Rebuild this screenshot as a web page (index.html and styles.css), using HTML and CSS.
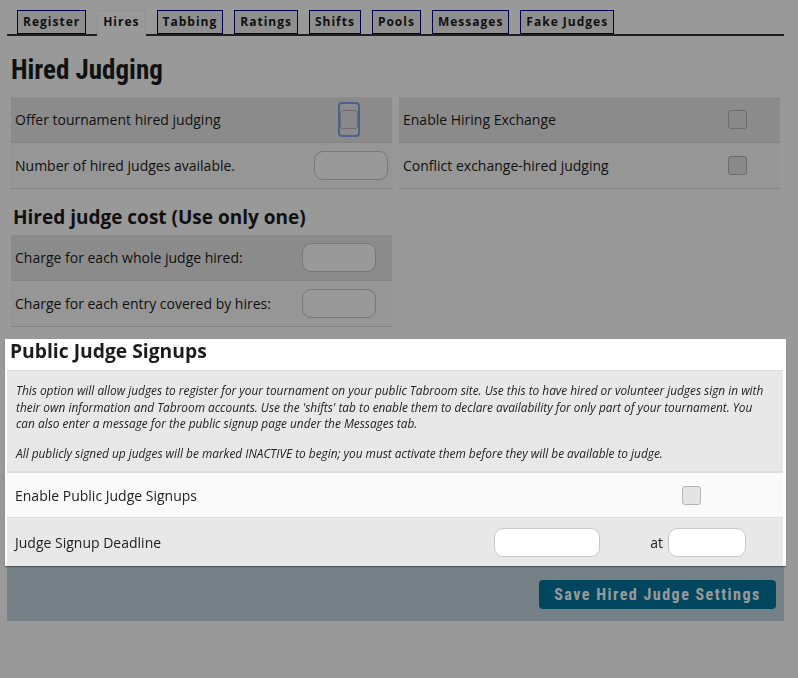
FILE: index.html
```html
<!DOCTYPE html>
<html>
<head>
<meta charset="utf-8">
<link rel="stylesheet" href="styles.css">
</head>
<body>
<div class="page">
  <nav class="tabs">
    <span class="tab">Register</span>
    <span class="tab active">Hires</span>
    <span class="tab">Tabbing</span>
    <span class="tab">Ratings</span>
    <span class="tab">Shifts</span>
    <span class="tab">Pools</span>
    <span class="tab">Messages</span>
    <span class="tab">Fake Judges</span>
  </nav>

  <h2 class="title">Hired Judging</h2>

  <div class="cols">
    <div class="col">
      <div class="row odd">
        <span class="label">Offer tournament hired judging</span>
        <span class="ctrl"><span class="focusring"><input type="checkbox" class="cb"></span></span>
      </div>
      <div class="row even">
        <span class="label">Number of hired judges available.</span>
        <span class="ctrl"><input type="text" class="num shifted"></span>
      </div>
    </div>
    <div class="col">
      <div class="row odd">
        <span class="label">Enable Hiring Exchange</span>
        <span class="ctrl"><input type="checkbox" class="cb"></span>
      </div>
      <div class="row even">
        <span class="label">Conflict exchange-hired judging</span>
        <span class="ctrl"><input type="checkbox" class="cb"></span>
      </div>
    </div>
  </div>

  <h4 class="subhead">Hired judge cost (Use only one)</h4>
  <div class="col cost">
    <div class="row odd">
      <span class="label">Charge for each whole judge hired:</span>
      <span class="ctrl wide"><input type="text" class="num"></span>
    </div>
    <div class="row even">
      <span class="label">Charge for each entry covered by hires:</span>
      <span class="ctrl wide"><input type="text" class="num"></span>
    </div>
  </div>

  <section class="spot">
    <h4 class="spothead">Public Judge Signups</h4>
    <div class="desc">
      <p>This option will allow judges to register for your tournament on your public Tabroom site. Use this to have hired or volunteer judges sign in with their own information and Tabroom accounts. Use the 'shifts' tab to enable them to declare availability for only part of your tournament. You can also enter a message for the public signup page under the Messages tab.</p>
      <p>All publicly signed up judges will be marked INACTIVE to begin; you must activate them before they will be available to judge.</p>
    </div>
    <div class="row even">
      <span class="label">Enable Public Judge Signups</span>
      <span class="ctrl signup"><input type="checkbox" class="cb"></span>
    </div>
    <div class="row odd deadline">
      <span class="label">Judge Signup Deadline</span>
      <input type="text" class="date">
      <span class="at">at</span>
      <input type="text" class="time">
    </div>
  </section>

  <div class="savebar">
    <button class="save">Save Hired Judge Settings</button>
  </div>
</div>
<div class="overlay"></div>
</body>
</html>
```

FILE: styles.css
```css
* { box-sizing: border-box; }

html, body {
  margin: 0;
  padding: 0;
  background: #fff;
}

body {
  font-family: "Open Sans", "Liberation Sans", sans-serif;
  color: #1c1c1c;
  font-size: 14px;
}

.page {
  width: 777px;
  margin-left: 7px;
  padding-top: 10px;
}

.tabs {
  display: flex;
  gap: 11px;
  padding-left: 10px;
  border-bottom: 2px solid #333;
  height: 26px;
}

.tab {
  height: 24px;
  padding: 0 5px;
  border: 1px solid #000080;
  background: #eee;
  font-weight: 700;
  font-size: 12px;
  letter-spacing: 1px;
  line-height: 22px;
  color: #1c1c1c;
}

.tab.active {
  background: #fff;
  border-color: #f2f2f2;
  border-bottom: 2px solid #fff;
  height: 26px;
}

.title {
  margin: 17px 0 10px 4px;
  font-family: "Roboto Condensed", "Fira Sans Condensed", "PT Sans Narrow", "Ubuntu Condensed", "Liberation Sans Narrow", "Arial Narrow", "Noto Sans Condensed", "Open Sans Condensed", "DejaVu Sans Condensed", sans-serif;
  font-size: 27px;
  line-height: 34px;
  font-weight: 700;
}

.cols {
  display: flex;
  gap: 7px;
  padding: 0 4px;
}

.col {
  width: 381px;
}

.col.cost {
  margin-left: 4px;
}

.row {
  display: flex;
  align-items: center;
  height: 46px;
  border-bottom: 1px solid #dcdcdc;
}

.row.odd { background: #e8e8e8; }
.row.even { background: #fafafa; }

.label {
  flex: 1;
  padding-left: 4px;
  white-space: nowrap;
}

.ctrl {
  width: 86px;
  display: flex;
  justify-content: center;
  align-items: center;
}

.ctrl.wide {
  width: 106px;
}

.cb {
  appearance: none;
  -webkit-appearance: none;
  margin: 0;
  width: 19px;
  height: 19px;
  border: 1px solid #b4b4b4;
  border-radius: 3px;
  background: #e4e4e4;
  display: block;
}

.focusring {
  display: block;
  width: 22px;
  height: 35px;
  padding: 6px 0;
  border: 2px solid #7aa5e6;
  border-radius: 4px;
}

.focusring .cb {
  width: 18px;
}

.num, .date, .time {
  appearance: none;
  margin: 0;
  height: 29px;
  border: 1px solid #c8c8c8;
  border-radius: 9px;
  background: #fff;
  font: inherit;
}

.num { width: 74px; }
.num.shifted { margin-left: 4px; }

.subhead {
  margin: 16px 0 6px 6px;
  font-size: 19px;
  line-height: 24px;
  font-weight: 700;
}

.spot {
  position: relative;
  z-index: 10;
  background: #fff;
  margin: 12px -2px 0 -2px;
  padding: 0 3px 0 2px;
  box-shadow: 0 1px 1px rgba(0, 0, 0, 0.35);
}

.spothead {
  margin: 0;
  padding: 0 0 7px 3px;
  font-size: 19.3px;
  line-height: 24px;
  font-weight: 700;
}

.desc {
  background: #e8e8e8;
  border-top: 1px solid #dcdcdc;
  border-bottom: 2px solid #dcdcdc;
  padding: 11px 9px 10px 9px;
  font-style: italic;
  font-size: 11.85px;
  line-height: 16.5px;
  color: #222;
}

.desc p { margin: 0; }
.desc p + p { margin-top: 13px; }

.spot .row { color: #222; }
.spot .label { padding-left: 8px; }

.spot .row.even { height: 45px; }

.ctrl.signup {
  width: auto;
  margin-right: 82px;
}

.deadline {
  height: 48px;
  border-bottom: none;
}

.date {
  width: 106px;
  margin-right: 50px;
}

.at {
  margin-right: 5px;
}

.time {
  width: 78px;
  margin-right: 37px;
}

.savebar {
  display: flex;
  justify-content: flex-end;
  align-items: center;
  height: 55px;
  padding: 1px 8px 0 0;
  background: #c3d7e1;
}

.save {
  height: 29px;
  width: 237px;
  border: none;
  border-radius: 4px;
  background: #00759d;
  color: #fff;
  font-family: "Roboto Condensed", "Fira Sans Condensed", "PT Sans Narrow", "Ubuntu Condensed", "Liberation Sans Narrow", "Arial Narrow", "Noto Sans Condensed", "Open Sans Condensed", "DejaVu Sans Condensed", sans-serif;
  font-weight: 700;
  font-size: 16px;
  letter-spacing: 1.5px;
  white-space: nowrap;
  padding: 0;
}

.overlay {
  position: fixed;
  inset: 0;
  background: rgba(0, 0, 0, 0.4);
  z-index: 5;
}
```
